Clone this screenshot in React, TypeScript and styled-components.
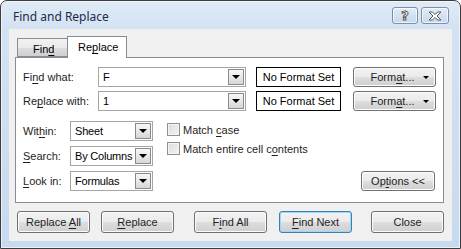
import React, {ReactElement} from 'react';
import styled, {createGlobalStyle} from 'styled-components';

const GlobalStyle = createGlobalStyle`
    html, body {
        margin: 0;
        padding: 0;
        background: #ffffff;
    }
    body {
        font-family: "Liberation Sans", Arial, sans-serif;
        font-size: 11px;
        color: #000;
    }
`;

const Key = styled.span`
    text-decoration: underline;
    text-underline-offset: 2px;
`;

// text with one underlined access key
function Label({text, k}: {text: string; k: number}): ReactElement {
    return (
        <span>
            {text.slice(0, k)}
            <Key>{text[k]}</Key>
            {text.slice(k + 1)}
        </span>
    );
}

function ComboBox({value, width}: {value: string; width: number}): ReactElement {
    return (
        <Combo $width={width}>
            <ComboText>{value}</ComboText>
            <DropButton>
                <Arrow />
            </DropButton>
        </Combo>
    );
}

export default function App(): ReactElement {
    return (
        <>
            <GlobalStyle />
            <Window>
                <TitleBar>
                    <Title>Find and Replace</Title>
                    <CaptionButtons>
                        <CaptionButton $width={26}>
                            <HelpGlyph>?</HelpGlyph>
                        </CaptionButton>
                        <CaptionButton $width={28}>
                            <svg width="14" height="10" viewBox="0 0 14 10">
                                <path
                                    d="M1 1 H4.5 L7 3.6 L9.5 1 H13 L9 5 L13 9 H9.5 L7 6.4 L4.5 9 H1 L5 5 Z"
                                    fill="#fff"
                                    stroke="#5a5a5a"
                                    strokeWidth="1"
                                    strokeLinejoin="round"
                                />
                            </svg>
                        </CaptionButton>
                    </CaptionButtons>
                </TitleBar>
                <Client>
                    <Tabs>
                        <Tab $active={false}>
                            <Label text="Find" k={3} />
                        </Tab>
                        <Tab $active>
                            <Label text="Replace" k={2} />
                        </Tab>
                    </Tabs>
                    <Panel>
                        <FieldRow>
                            <FieldLabel $width={75}>
                                <Label text="Find what:" k={2} />
                            </FieldLabel>
                            <ComboBox value="F" width={148} />
                            <FormatSet>No Format Set</FormatSet>
                            <Button $width={83} $height={20}>
                                <ButtonText>
                                    <Label text="Format..." k={4} />
                                </ButtonText>
                                <SmallArrow />
                            </Button>
                        </FieldRow>
                        <FieldRow>
                            <FieldLabel $width={75}>
                                <Label text="Replace with:" k={2} />
                            </FieldLabel>
                            <ComboBox value="1" width={148} />
                            <FormatSet>No Format Set</FormatSet>
                            <Button $width={83} $height={20}>
                                <ButtonText>
                                    <Label text="Format..." k={4} />
                                </ButtonText>
                                <SmallArrow />
                            </Button>
                        </FieldRow>
                        <Options>
                            <OptionFields>
                                <FieldLabel $width={47}>
                                    <Label text="Within:" k={3} />
                                </FieldLabel>
                                <ComboBox value="Sheet" width={83} />
                                <FieldLabel $width={47}>
                                    <Label text="Search:" k={0} />
                                </FieldLabel>
                                <ComboBox value="By Columns" width={83} />
                                <FieldLabel $width={47}>
                                    <Label text="Look in:" k={0} />
                                </FieldLabel>
                                <ComboBox value="Formulas" width={83} />
                            </OptionFields>
                            <Checks>
                                <Check>
                                    <Box />
                                    <Label text="Match case" k={6} />
                                </Check>
                                <Check>
                                    <Box />
                                    <Label text="Match entire cell contents" k={19} />
                                </Check>
                            </Checks>
                            <OptionsButton $width={74} $height={20}>
                                <Label text="Options <<" k={2} />
                            </OptionsButton>
                        </Options>
                    </Panel>
                    <Footer>
                        <Button $width={73} $height={22}>
                            <Label text="Replace All" k={8} />
                        </Button>
                        <Button $width={73} $height={22} $gap={11}>
                            <Label text="Replace" k={0} />
                        </Button>
                        <Button $width={73} $height={22} $gap={20}>
                            <Label text="Find All" k={1} />
                        </Button>
                        <Button $width={73} $height={22} $gap={12} $default>
                            <Label text="Find Next" k={0} />
                        </Button>
                        <Button $width={73} $height={22} $gap={19}>
                            <span>Close</span>
                        </Button>
                    </Footer>
                </Client>
            </Window>
        </>
    );
}

const Window = styled.div`
    box-sizing: border-box;
    width: 461px;
    height: 249px;
    display: flex;
    flex-direction: column;
    border: 1px solid #3d3d3d;
    border-radius: 7px 7px 0 0;
    background: linear-gradient(180deg, #dfeaf6 0px, #d3e2f3 28px, #c8daef 100%);
    box-shadow: inset 0 0 0 1px rgba(255, 255, 255, 0.6);
`;

const TitleBar = styled.div`
    height: 28px;
    display: flex;
    align-items: center;
    justify-content: space-between;
    padding: 0 11px 0 12px;
`;

const Title = styled.div`
    font-family: "Noto Sans", "Open Sans", sans-serif;
    font-size: 12px;
    color: #1e2a48;
    margin-top: 2px;
`;

const CaptionButtons = styled.div`
    display: flex;
    gap: 3px;
    margin-top: 1px;
`;

const CaptionButton = styled.div<{$width: number}>`
    box-sizing: border-box;
    width: ${({$width}) => $width}px;
    height: 17px;
    border: 1px solid #7d8da3;
    border-radius: 3px;
    background: linear-gradient(180deg, #e4edf7 0%, #d3e1f1 50%, #c7d8ed 100%);
    box-shadow: inset 0 0 0 1px rgba(255, 255, 255, 0.7);
    display: flex;
    align-items: center;
    justify-content: center;
`;

const HelpGlyph = styled.span`
    font-family: "DejaVu Sans", sans-serif;
    font-size: 13px;
    font-weight: bold;
    color: #fff;
    -webkit-text-stroke: 1px #5a5a5a;
    line-height: 1;
`;

const Client = styled.div`
    flex: 1;
    margin: 0 8px 7px 8px;
    background: #f0f0f0;
    display: flex;
    flex-direction: column;
    padding: 7px 8px 0 6px;
`;

const Tabs = styled.div`
    display: flex;
    align-items: flex-end;
    height: 21px;
    padding-left: 2px;
    position: relative;
    z-index: 1;
`;

const Tab = styled.div<{$active: boolean}>`
    box-sizing: border-box;
    height: ${({$active}) => ($active ? 22 : 19)}px;
    padding: ${({$active}) => ($active ? '2px 10px 0 10px' : '2px 13px 0 15px')};
    width: ${({$active}) => ($active ? 60 : 50)}px;
    border: 1px solid #898c95;
    border-bottom: ${({$active}) => ($active ? 'none' : '1px solid #898c95')};
    border-right: ${({$active}) => ($active ? '1px solid #898c95' : 'none')};
    background: ${({$active}) =>
        $active ? '#ffffff' : 'linear-gradient(180deg, #f2f2f2 0%, #ebebeb 50%, #dddddd 50%, #cfcfcf 100%)'};
    margin-bottom: ${({$active}) => ($active ? -1 : 0)}px;
    line-height: 16px;
`;

const Panel = styled.div`
    box-sizing: border-box;
    height: 146px;
    border: 1px solid #898c95;
    background: #ffffff;
    padding: 9px 7px 0 7px;
    display: flex;
    flex-direction: column;
    gap: 4px;
`;

const FieldRow = styled.div`
    display: flex;
    align-items: center;
    height: 20px;
`;

const FieldLabel = styled.div<{$width: number}>`
    width: ${({$width}) => $width}px;
    flex-shrink: 0;
    color: #1e1e1e;
`;

const Combo = styled.div<{$width: number}>`
    box-sizing: border-box;
    width: ${({$width}) => $width}px;
    height: 20px;
    border: 1px solid #a5a5a5;
    background: #fff;
    display: flex;
    align-items: center;
    padding: 1px;
    flex-shrink: 0;
`;

const ComboText = styled.span`
    flex: 1;
    padding-left: 3px;
    color: #000;
    white-space: nowrap;
    overflow: hidden;
    letter-spacing: -0.2px;
`;

const DropButton = styled.div`
    box-sizing: border-box;
    width: 16px;
    height: 16px;
    flex-shrink: 0;
    border: 1px solid #8a8a8a;
    background: linear-gradient(180deg, #f7f7f7 0%, #e8e8e8 50%, #d6d6d6 100%);
    display: flex;
    align-items: center;
    justify-content: center;
`;

const Arrow = styled.div`
    width: 0;
    height: 0;
    border-left: 4px solid transparent;
    border-right: 4px solid transparent;
    border-top: 4px solid #000;
`;

const SmallArrow = styled(Arrow)`
    border-left-width: 3px;
    border-right-width: 3px;
    border-top-width: 3px;
    margin-right: 6px;
`;

const FormatSet = styled.div`
    box-sizing: border-box;
    width: 85px;
    height: 20px;
    margin: 0 12px 0 10px;
    border: 1px solid #000;
    background: #fff;
    display: flex;
    align-items: center;
    justify-content: center;
`;

const Button = styled.div<{$width: number; $height: number; $gap?: number; $default?: boolean}>`
    box-sizing: border-box;
    width: ${({$width}) => $width}px;
    height: ${({$height}) => $height}px;
    margin-left: ${({$gap}) => $gap ?? 0}px;
    border: 1px solid ${({$default}) => ($default ? '#3c7fb1' : '#707070')};
    border-radius: 3px;
    background: linear-gradient(180deg, #f2f2f2 0%, #ebebeb 48%, #dddddd 52%, #cfcfcf 100%);
    box-shadow: inset 0 0 0 1px ${({$default}) => ($default ? '#9ad8f7' : '#fcfcfc')};
    display: flex;
    align-items: center;
    justify-content: center;
    color: #1e1e1e;
    flex-shrink: 0;
`;

const ButtonText = styled.span`
    flex: 1;
    text-align: center;
    padding-left: 8px;
`;

const Options = styled.div`
    display: flex;
    margin-top: 6px;
`;

const OptionFields = styled.div`
    display: grid;
    grid-template-columns: 47px 83px;
    grid-auto-rows: 20px;
    row-gap: 5px;
    align-items: center;
`;

const Checks = styled.div`
    flex: 1;
    display: flex;
    flex-direction: column;
    gap: 6px;
    padding: 2px 0 0 14px;
`;

const Check = styled.div`
    display: flex;
    align-items: center;
    gap: 3px;
    color: #1e1e1e;
`;

const Box = styled.div`
    box-sizing: border-box;
    width: 13px;
    height: 13px;
    border: 1px solid #8f8f8f;
    background: linear-gradient(135deg, #dcdcdc 0%, #f4f4f4 100%);
    box-shadow: inset 0 0 0 1px #f4f4f4;
`;

const OptionsButton = styled(Button)`
    align-self: flex-end;
    margin-right: 1px;
`;

const Footer = styled.div`
    display: flex;
    align-items: center;
    padding: 8px 0 0 2px;
`;
